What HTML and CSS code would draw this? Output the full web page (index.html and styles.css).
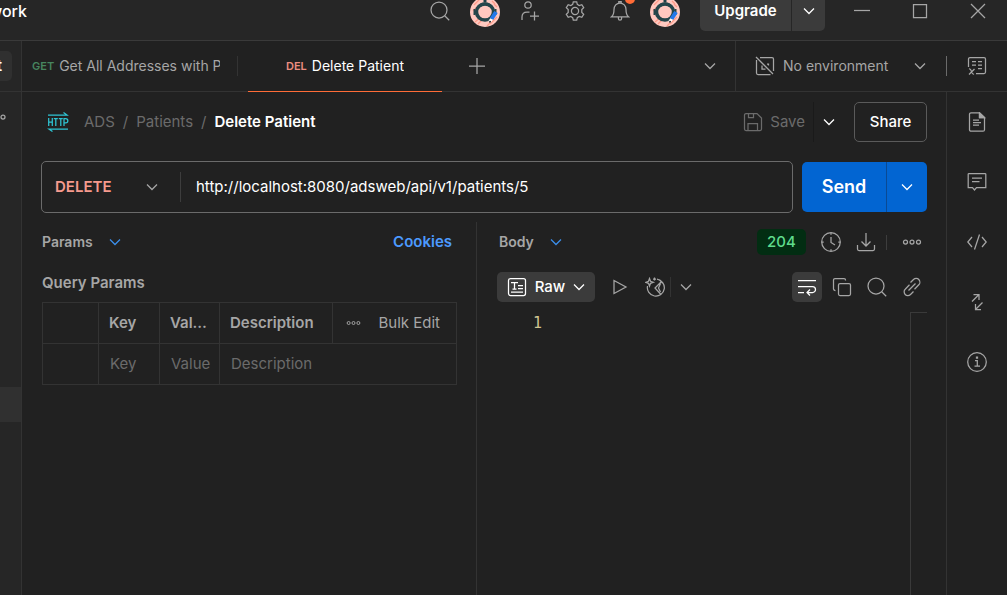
FILE: index.html
```html
<!DOCTYPE html>
<html lang="en">
<head>
<meta charset="utf-8">
<title>Delete Patient</title>
<link rel="stylesheet" href="styles.css">
</head>
<body>
<svg class="defs" aria-hidden="true">
  <symbol id="chev" viewBox="0 0 12 12"><path d="M1 3.500 6 8.500l5-5"/></symbol>
  <symbol id="search" viewBox="0 0 20 20"><circle cx="9" cy="9" r="8"/><path d="m14.700 14.700 4.500 4.500"/></symbol>
  <symbol id="dots" viewBox="0 0 20 8"><circle cx="3.500" cy="4" r="2"/><circle cx="10" cy="4" r="2"/><circle cx="16.500" cy="4" r="2"/></symbol>
  <symbol id="avatar" viewBox="0 0 30 30">
    <circle cx="15" cy="15" r="15" fill="#ffc9c0" stroke="none"/>
    <path d="M4 8 10 2M3 14l4-4M5 25l6-5M8 27l4-4M20 27l7-7M17 29l3-3M24 7l3 3M22 4l3 3" stroke="#ff9a88"/>
    <path d="M15 0v5" stroke="#1f4248" stroke-width="3"/>
    <ellipse cx="15" cy="15" rx="8.500" ry="8" fill="#ffc9c0" stroke="#24464a" stroke-width="3.500"/>
    <path d="M4.500 12v6M25.500 12v6" stroke="#24464a" stroke-width="2"/>
    <path d="M10 8.500c3-2 7-2 10 0" stroke="#24464a" stroke-width="3"/>
    <path d="m26 15-4.500 7" stroke="#2478ea" stroke-width="4"/>
    <path d="m21.500 22-2 3" stroke="#fff" stroke-width="3"/><path d="m20.500 24-1 1.500" stroke="#222" stroke-width="1.500"/>
  </symbol>
</svg>

<header class="topbar">
  <span class="brand">work</span>
  <div class="top-tools">
    <button class="tool" aria-label="Search"><svg class="i20"><use href="#search"/></svg></button>
    <button class="tool" aria-label="Agent"><svg class="i30"><use href="#avatar"/></svg></button>
    <button class="tool" aria-label="Invite"><svg class="i20" viewBox="0 0 20 20"><circle cx="8" cy="4" r="3.200"/><path d="M2 19v-3c0-3 2-5 5-5h2.500M14.500 10.500v9M10 15h9"/></svg></button>
    <button class="tool" aria-label="Settings"><svg class="i20" viewBox="0 0 20 20"><circle cx="10" cy="10" r="3.600"/><path d="M8.300.8h3.400l.6 2.600 1.900 1.100 2.600-.8 1.900 3-1.900 1.900v2.800l1.900 1.900-1.900 3-2.600-.8-1.900 1.100-.6 2.600H8.300l-.6-2.600-1.900-1.100-2.600.8-1.900-3 1.900-1.900V8.600L1.300 6.700l1.900-3 2.600.8 1.900-1.100z"/></svg></button>
    <button class="tool" aria-label="Notifications"><svg class="i20" viewBox="0 0 20 20"><path d="M1.500 15.800c2.500-2 2.500-4 2.500-7.300C4 5 6.500 2 10 2s6 3 6 6.500c0 3.300 0 5.300 2.500 7.300zM8.800 2V.5h2.400V2M8.400 16v1.500a1.600 1.600 0 0 0 3.200 0V16"/></svg><span class="badge"></span></button>
    <button class="tool" aria-label="Account"><svg class="i30"><use href="#avatar"/></svg></button>
  </div>
  <div class="upgrade"><button class="upgrade-main">Upgrade</button><button class="upgrade-more" aria-label="Plans"><svg class="i12"><use href="#chev"/></svg></button></div>
  <div class="window">
    <button aria-label="Minimize"><svg class="i16" viewBox="0 0 16 16"><path d="M0 7.500h16"/></svg></button>
    <button aria-label="Maximize"><svg class="i16" viewBox="0 0 16 16"><path d="M1.500 1.500h13v13h-13z"/></svg></button>
    <button aria-label="Close"><svg class="i16" viewBox="0 0 16 16"><path d="m1 1 14 14M15 1 1 15"/></svg></button>
  </div>
</header>

<div class="shell">
  <aside class="sidebar">
    <div class="side-head"><button class="side-btn">t</button></div>
    <svg class="side-ring" viewBox="0 0 8 8"><circle cx="3" cy="4" r="2"/></svg>
    <div class="side-selected"></div>
  </aside>

  <div class="main">
    <nav class="tabbar">
      <button class="tab"><b class="get">GET</b><span class="tab-name">Get All Addresses with P</span></button>
      <button class="tab active"><b class="del">DEL</b><span class="tab-name">Delete Patient</span></button>
      <button class="add" aria-label="New tab"><svg class="i16" viewBox="0 0 16 16"><path d="M8 0v16M0 8h16"/></svg></button>
      <button class="tabs-more" aria-label="All tabs"><svg class="i12"><use href="#chev"/></svg></button>
      <button class="env"><svg class="i20" viewBox="0 0 20 20"><path d="M5 1.500h12a1.500 1.500 0 0 1 1.500 1.500v12M1.500 4v13A1.500 1.500 0 0 0 3 18.500h12.500M1 1l17 17M7 9.500v3.500h3.500M12 8h1.500v1.500"/></svg><span class="env-name">No environment</span><svg class="i12"><use href="#chev"/></svg></button>
      <button class="env-view" aria-label="Variables"><svg class="i20" viewBox="0 0 20 20"><path d="M1.500 11V3A1.500 1.500 0 0 1 3 1.500h14A1.500 1.500 0 0 1 18.500 3v13a1.500 1.500 0 0 1-1.500 1.500H9M5 5.500h4M5 9h4M11 5.500h4M11 9h4M11 12.500h4M2 13c3-1 2 6 5 5M7.500 13 2 18.500"/></svg></button>
    </nav>

    <div class="work">
      <main class="content">
        <div class="crumbs">
          <svg class="http" viewBox="0 0 22 20"><path d="M1 3h19l-3.500-2.500M21 17H2l3.500 2.500M1.700 6v8M5.300 6v8M1.700 10h3.600M6.800 6.500h4M8.800 6.500V14M11.800 6.500h4M13.800 6.500V14M17 14V6.500h1.700a2 2 0 0 1 0 4.300H17"/></svg>
          <a href="#">ADS</a><i>/</i><a href="#">Patients</a><i>/</i><strong>Delete Patient</strong>
          <button class="save" disabled><svg class="i20" viewBox="0 0 20 20"><path d="M3 1.500h11l4.500 4.500v11a1.500 1.500 0 0 1-1.500 1.500H3A1.500 1.500 0 0 1 1.500 17V3A1.500 1.500 0 0 1 3 1.500zM5.500 1.500V5.500h5v-4M5 18.500v-7h9.500v7"/></svg>Save</button>
          <button class="save-more" aria-label="Save options"><svg class="i12"><use href="#chev"/></svg></button>
          <button class="share">Share</button>
        </div>

        <div class="request">
          <div class="urlbox">
            <label class="method"><select aria-label="Method"><option>DELETE</option></select><svg class="i12"><use href="#chev"/></svg></label>
            <input class="url" aria-label="Request URL" value="http://localhost:8080/adsweb/api/v1/patients/5">
          </div>
          <div class="send"><button class="send-main">Send</button><button class="send-more" aria-label="Send options"><svg class="i12"><use href="#chev"/></svg></button></div>
        </div>

        <div class="panes">
          <section class="pane-req">
            <div class="row-head"><button class="picker">Params<svg class="i12"><use href="#chev"/></svg></button><a class="cookies" href="#">Cookies</a></div>
            <h2>Query Params</h2>
            <table>
              <colgroup><col class="c-check"><col class="c-key"><col class="c-value"><col class="c-desc"><col></colgroup>
              <thead><tr><th></th><th>Key</th><th>Value</th><th>Description</th><th><div class="bulk"><svg class="dots-s"><use href="#dots"/></svg><button>Bulk Edit</button></div></th></tr></thead>
              <tbody><tr><td></td><td><input aria-label="Key" placeholder="Key"></td><td><input aria-label="Value" placeholder="Value"></td><td colspan="2"><input aria-label="Description" placeholder="Description"></td></tr></tbody>
            </table>
          </section>

          <section class="pane-res">
            <div class="row-head"><button class="picker">Body<svg class="i12"><use href="#chev"/></svg></button>
              <span class="status">204</span>
              <div class="icons">
                <button aria-label="History"><svg class="i20" viewBox="0 0 20 20"><circle cx="10" cy="10" r="9.300"/><path d="M10 5v5.500l4 2.500M10 .7v2M10 17.300v2M.7 10h2M17.300 10h2"/></svg></button>
                <button aria-label="Download"><svg class="i20" viewBox="0 0 20 20"><path d="M10 1v13M5.500 9.500 10 14l4.500-4.500M1.500 13v4A1.500 1.500 0 0 0 3 18.500h14a1.500 1.500 0 0 0 1.500-1.500v-4"/></svg></button>
                <span class="sep"></span>
                <button aria-label="More"><svg class="dots"><use href="#dots"/></svg></button>
              </div>
            </div>
            <div class="row-tools">
              <button class="raw"><svg class="i20" viewBox="0 0 20 20"><rect x="1.500" y="1.500" width="17" height="17" rx="2"/><path d="M4 5.500h7M7.500 5.500v6.500M5.500 12h4M11 8.500h5M11 11.500h5M4 15h12"/></svg>Raw<svg class="i12"><use href="#chev"/></svg></button>
              <button class="sq" aria-label="Preview"><svg class="i16" viewBox="0 0 16 16"><path d="M2 1.500v13L14 8z"/></svg></button>
              <button class="sq visual" aria-label="Visualize"><svg class="i20" viewBox="0 0 20 20"><path d="M12 2.200A8.500 8.500 0 1 1 2.500 9M14 2.700a8.500 8.500 0 0 1 3.500 3.500M16 5l-6 6 5.500 6M15.500 6.500l-2 4.500 2 4M4.500 1.500l1 2.800 2.800 1-2.800 1-1 2.800-1-2.800-2.800-1 2.800-1zM9.500.5v3M8 2h3"/></svg></button>
              <button class="vis-more" aria-label="Visualize options"><svg class="i12"><use href="#chev"/></svg></button>
              <div class="icons">
                <button class="on" aria-label="Wrap lines"><svg class="i20" viewBox="0 0 20 20"><path d="M1 3.500h18M1 9.500h14.500a3 3 0 0 1 0 6H10M13 12.500l-3 3 3 3M1 15.500h6"/></svg></button>
                <button aria-label="Copy"><svg class="i20" viewBox="0 0 20 20"><rect x="6.500" y="6.500" width="12" height="12" rx="1.500"/><path d="M3.500 13.500A2 2 0 0 1 1.500 12V3A1.500 1.500 0 0 1 3 1.500h9A1.500 1.500 0 0 1 13.500 3v.5"/></svg></button>
                <button aria-label="Find"><svg class="i20"><use href="#search"/></svg></button>
                <button aria-label="Copy link"><svg class="i20" viewBox="0 0 20 20"><path d="m6.500 13.500 7-7M8.500 5.500l3-3c1.500-1.500 4-1.500 5.300 0s1.500 4 0 5.300l-4.300 4.400M11.500 14.500l-3 3c-1.500 1.500-4 1.500-5.300 0s-1.500-4 0-5.300l4.300-4.400"/></svg></button>
              </div>
            </div>
            <div class="editor"><div class="line">1</div><div class="minimap"></div></div>
          </section>
        </div>
      </main>

      <aside class="rail">
        <button aria-label="Documentation"><svg class="i20" viewBox="0 0 20 20"><path d="M12.500.8H4A1.500 1.500 0 0 0 2.500 2.300v15.400A1.500 1.500 0 0 0 4 19.200h12a1.500 1.500 0 0 0 1.500-1.500V5.500zV5.500h5M6 8h6M6 10.500h8M6 13h6"/><path class="solid" d="M12.500.8v4.700h5z"/></svg></button>
        <button aria-label="Comments"><svg class="i20" viewBox="0 0 20 20"><path d="M2 1.500h16a.8.8 0 0 1 .8.800v13.400h-9.300L7.500 18l-2-2.300H1.200V2.300a.8.8 0 0 1 .8-.8zM5 6h10M5 9.500h7.500"/></svg></button>
        <button aria-label="Code"><svg class="i20" viewBox="0 0 20 20"><path d="M5 5 .8 10 5 15M15 5l4.200 5-4.200 5M12.500 2.500l-5 15"/></svg></button>
        <button aria-label="Related"><svg class="i20" viewBox="0 0 20 20"><path d="m5 9.500 6.500-6.500M6.500 2.500H12V8M15.500 10.500 9 17M14 17.500H8.500V12"/></svg></button>
        <button aria-label="Info"><svg class="i20" viewBox="0 0 20 20"><circle cx="10" cy="10" r="9.300"/><path d="M8 8.500h2.300v5.500M7.500 14H13M9.500 5h1v1h-1z"/></svg></button>
      </aside>
    </div>
  </div>
</div>
</body>
</html>
```
FILE: styles.css
```css
* { box-sizing: border-box; }
body { margin: 0; height: 100vh; display: flex; flex-direction: column; overflow: hidden; background: #212121; color: #a6a6a6; font: 15px/20px Inter, "Liberation Sans", sans-serif; }
button, input, select { font: inherit; color: inherit; background: none; border: 0; padding: 0; margin: 0; outline: 0; }
button { display: flex; align-items: center; justify-content: center; white-space: nowrap; }
a { color: inherit; text-decoration: none; }
svg { fill: none; stroke: currentColor; stroke-width: 1.25; flex: none; }
.defs { display: none; }
.i12 { width: 12px; height: 12px; }
.i16 { width: 16px; height: 16px; }
.i20 { width: 20px; height: 20px; }
.i30 { width: 30px; height: 30px; margin-top: 2px; }
.dots { width: 20px; height: 8px; }
.dots-s { width: 15px; height: 6px; }
.solid { fill: currentColor; }

.topbar { display: flex; flex: none; height: 41px; background: #262626; border-bottom: 1px solid #3a3a3a; }
.brand { width: 27px; height: 22px; display: flex; justify-content: flex-end; overflow: hidden; font-size: 16px; line-height: 22px; font-weight: 500; color: #fff; }
.top-tools { display: flex; margin-left: auto; height: 22px; }
.tool { position: relative; width: 45px; height: 22px; }
.badge { position: absolute; top: -6px; right: 7px; width: 10px; height: 10px; border-radius: 50%; background: #ff6c37; }
.upgrade { display: flex; height: 31px; margin: 0 8px 0 13px; background: #3b3b3b; border-radius: 0 0 5px 5px; color: #fff; }
.upgrade-main { width: 91px; height: 22px; font-weight: 600; }
.upgrade-more { width: 34px; height: 31px; padding-bottom: 9px; border-left: 1px solid #262626; }
.window { display: flex; height: 22px; }
.window button { width: 58px; }

.shell { display: flex; flex: 1; min-height: 0; }
.sidebar { flex: none; width: 22px; display: flex; flex-direction: column; background: #262626; border-right: 1px solid #333; }
.side-head { height: 51px; padding-top: 10px; border-bottom: 1px solid #333; }
.side-btn { width: 12px; height: 30px; padding-right: 10px; justify-content: flex-end; overflow: hidden; background: #303030; border-radius: 0 5px 5px 0; color: #fff; font-weight: 600; }
.side-ring { width: 8px; height: 8px; margin-top: 21px; }
.side-selected { height: 35px; margin-top: 266px; background: #303030; }

.main { flex: 1; min-width: 0; display: flex; flex-direction: column; }
.tabbar { display: flex; flex: none; height: 51px; box-shadow: inset 0 -1px #333; }
.tabbar button { border-bottom: 1px solid transparent; }
.tabbar .tab { width: 216px; padding: 0 18px 0 10px; gap: 5px; font-size: 14px; justify-content: flex-start; background: linear-gradient(#333, #333) right center / 1px 20px no-repeat; }
.tab b { font-size: 11px; font-weight: 600; }
.tab-name { overflow: hidden; }
.get { color: #47855f; }
.del { color: #ec8d80; }
.tabbar .tab.active { width: 194px; margin-left: 10px; padding: 0; justify-content: center; background: none; color: #fff; border-bottom-color: #ff6c37; }
.add { width: 70px; }
.tabs-more { width: 52px; margin-left: auto; }
.tabbar .tabs-more { border-right: 1px solid #333; }
.env { width: 211px; padding: 0 21px 0 19px; gap: 8px; background: linear-gradient(#6b6b6b, #6b6b6b) right center / 1px 20px no-repeat; }
.env-name { flex: 1; text-align: left; font-size: 14px; }
.env-view { width: 60px; }

.work { display: flex; flex: 1; min-height: 0; }
.content { flex: 1; min-width: 0; display: flex; flex-direction: column; }
.rail { flex: none; width: 61px; border-left: 1px solid #333; }
.rail button { width: 100%; height: 60px; }

.crumbs { display: flex; align-items: center; height: 40px; margin: 10px 19px 19px 25px; gap: 8px; color: #6b6b6b; }
.crumbs i { font-style: normal; }
.crumbs strong { font-weight: 600; color: #fff; }
.http { width: 22px; height: 20px; margin-right: 7px; color: #2fc4d3; }
.save { height: 40px; margin-left: auto; gap: 7px; color: #6b6b6b; }
.save-more { width: 31px; height: 40px; margin-right: 2px; border-left: 1px solid #1a1a1a; color: #fff; }
.share { width: 73px; height: 40px; border: 1px solid #5a5a5a; border-radius: 5px; font-weight: 500; color: #fff; }

.request { display: flex; align-items: center; gap: 9px; margin: 0 19px; }
.urlbox { flex: 1; min-width: 0; display: flex; align-items: center; height: 52px; border: 1px solid #6b6b6b; border-radius: 5px; }
.method { display: flex; align-items: center; width: 139px; height: 30px; padding: 0 22px 0 13px; border-right: 1px solid #3d3d3d; }
.method select { flex: 1; appearance: none; color: #f79a8e; font-weight: 600; }
.url { flex: 1; min-width: 0; padding: 0 15px; color: #fff; }
.send { display: flex; height: 50px; border-radius: 5px; overflow: hidden; background: #0265d2; color: #fff; }
.send-main { width: 84px; font-size: 18px; font-weight: 600; }
.send-more { width: 41px; border-left: 1px solid #0a4a94; }

.panes { display: grid; grid-template-columns: minmax(0, 455fr) minmax(0, 469fr); flex: 1; margin-top: 9px; min-height: 0; }
.pane-req { padding: 0 19px 0 20px; border-right: 1px solid #333; }
.pane-res { display: flex; flex-direction: column; padding: 0 19px 0 20px; }
.row-head { display: flex; align-items: center; height: 40px; }
.picker { gap: 16px; margin-right: auto; padding-left: 2px; font-size: 14px; font-weight: 600; }
.pane-req .picker { padding-left: 0; }
.picker svg { color: #3b8eea; }
.cookies { margin-right: 5px; font-weight: 600; color: #4c9aff; }
h2 { margin: 9px 0 7px; font-size: 15px; line-height: 24px; font-weight: 600; }
table { width: 100%; table-layout: fixed; border-collapse: collapse; }
.c-check { width: 56px; }
.c-key { width: 61px; }
.c-value { width: 60px; }
.c-desc { width: 113px; }
th, td { height: 41px; border: 1px solid #333; padding: 0 10px; text-align: left; white-space: nowrap; }
th { padding-right: 12px; font-weight: 600; overflow: hidden; text-overflow: ellipsis; }
th:last-child { padding: 0 16px 0 13px; }
td { padding: 0 0 0 11px; }
td input { display: block; width: 100%; }
td input::placeholder { color: #6b6b6b; opacity: 1; }
.bulk { display: flex; align-items: center; justify-content: space-between; font-weight: 400; }

.status { width: 49px; height: 26px; margin-right: 10px; border-radius: 5px; background: #022d12; color: #5fdc8c; font-weight: 500; line-height: 26px; text-align: center; }
.icons { display: flex; align-items: center; gap: 5px; }
.icons button { width: 30px; height: 30px; border-radius: 5px; }
.sep { width: 1px; height: 15px; margin-right: 5px; background: #3d3d3d; }
.icons .on { background: #3b3b3b; color: #fff; }
.row-tools { display: flex; align-items: center; height: 30px; margin: 10px 0; }
.row-tools .icons { margin-left: auto; }
.raw { width: 98px; height: 30px; gap: 8px; background: #3b3b3b; border-radius: 5px; color: #fff; font-weight: 500; }
.sq { width: 30px; height: 30px; margin-left: 10px; }
.visual { margin-left: 5px; }
.vis-more { width: 30px; height: 20px; border-left: 1px solid #333; }
.editor { flex: 1; display: flex; justify-content: space-between; }
.line { padding-left: 36px; font: 15px/22px "DejaVu Sans Mono", monospace; color: #d0c490; }
.minimap { width: 17px; border-left: 1px solid #3a3a3a; border-top: 1px solid #3a3a3a; }
```
